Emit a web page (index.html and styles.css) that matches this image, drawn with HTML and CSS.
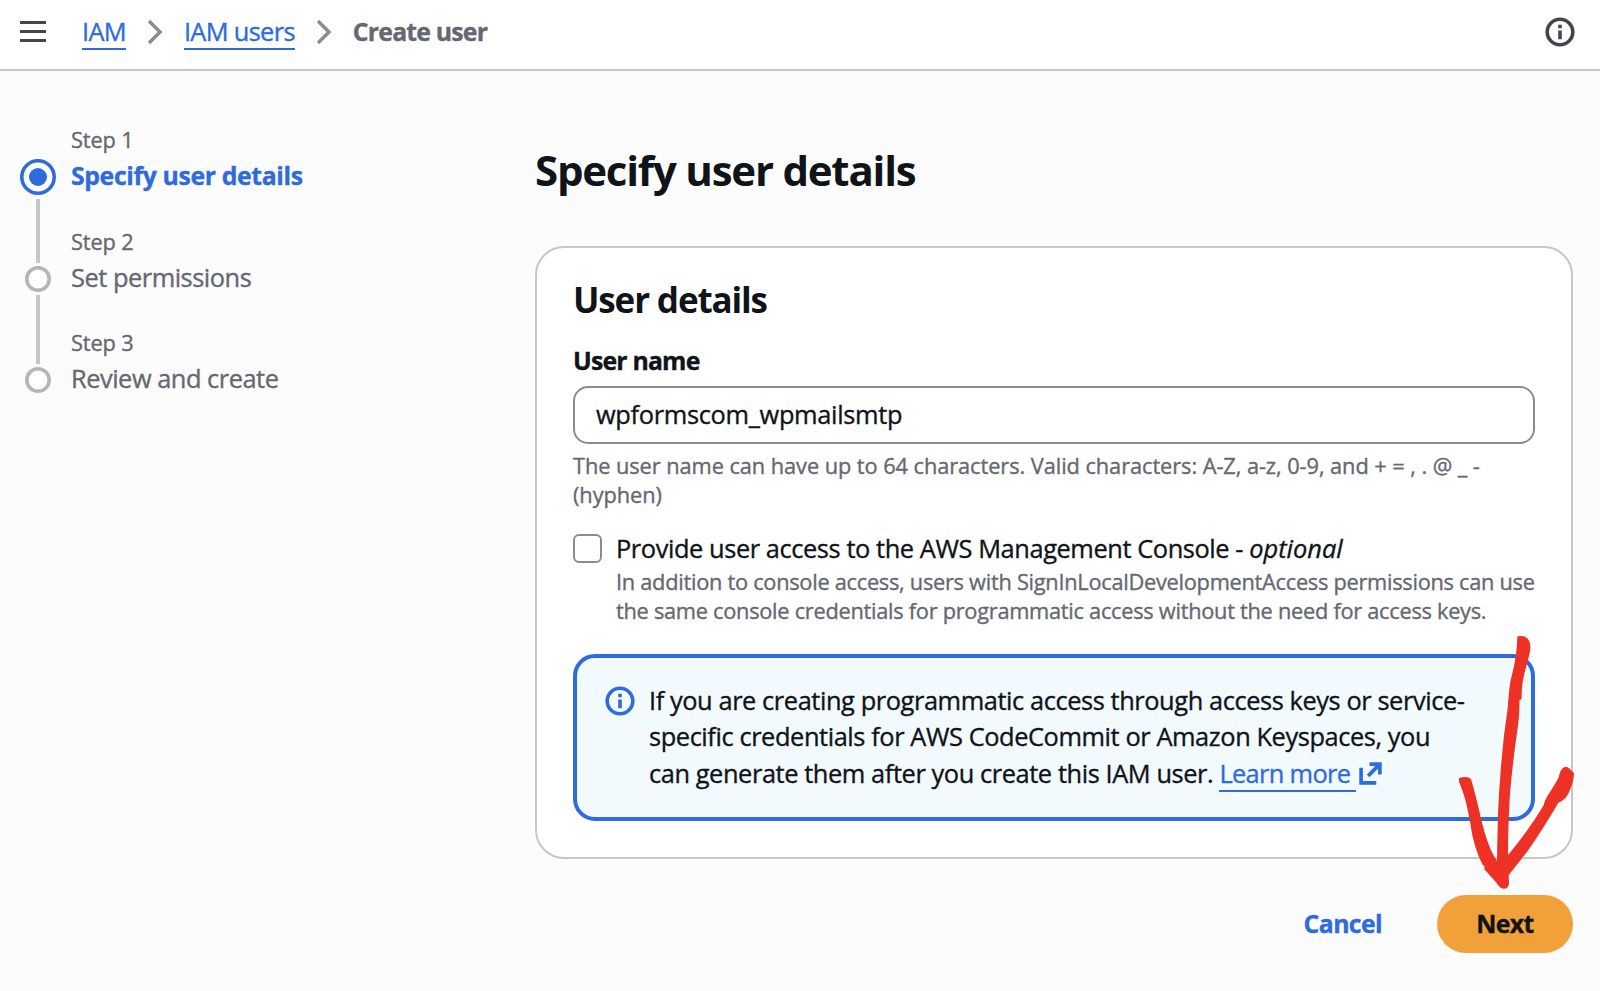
FILE: index.html
```html
<!DOCTYPE html>
<html lang="en">
<head>
    <meta charset="UTF-8">
    <meta name="viewport" content="width=device-width, initial-scale=1.0">
    <title>Create user | IAM</title>
    <link rel="stylesheet" href="styles.css">
</head>
<body>
    <header class="topbar">
        <button class="menu-button" aria-label="Menu"><span></span><span></span><span></span></button>
        <nav class="breadcrumbs">
            <a href="#">IAM</a>
            <svg class="chevron" width="16" height="26" viewBox="0 0 16 26"><path d="M2 2l11 11L2 24"/></svg>
            <a href="#">IAM users</a>
            <svg class="chevron" width="16" height="26" viewBox="0 0 16 26"><path d="M2 2l11 11L2 24"/></svg>
            <span class="crumb-current">Create user</span>
        </nav>
        <svg class="info-icon" width="30" height="30" viewBox="0 0 30 30">
            <circle cx="15" cy="15" r="12.8"/>
            <path d="M15 7.8v3.4M15 13.5v8.7"/>
        </svg>
    </header>

    <div class="layout">
        <ol class="steps">
            <li class="step active">
                <div class="marker">
                    <svg width="36" height="36" viewBox="0 0 36 36">
                        <circle class="ring" cx="18" cy="18" r="16.2"/>
                        <circle class="dot" cx="18" cy="18" r="9"/>
                    </svg>
                    <div class="line"></div>
                </div>
                <div>
                    <div class="step-number">Step 1</div>
                    <div class="step-title">Specify user details</div>
                </div>
            </li>
            <li class="step">
                <div class="marker">
                    <svg width="26" height="26" viewBox="0 0 26 26"><circle class="ring" cx="13" cy="13" r="11.2"/></svg>
                    <div class="line"></div>
                </div>
                <div>
                    <div class="step-number">Step 2</div>
                    <div class="step-title">Set permissions</div>
                </div>
            </li>
            <li class="step">
                <div class="marker">
                    <svg width="26" height="26" viewBox="0 0 26 26"><circle class="ring" cx="13" cy="13" r="11.2"/></svg>
                </div>
                <div>
                    <div class="step-number">Step 3</div>
                    <div class="step-title">Review and create</div>
                </div>
            </li>
        </ol>

        <main>
            <h1>Specify user details</h1>
            <section class="card">
                <h2>User details</h2>
                <label class="field-label" for="username">User name</label>
                <input class="text-input" id="username" type="text" value="wpformscom_wpmailsmtp" spellcheck="false">
                <p class="hint hint-name">The user name can have up to 64 characters. Valid characters: A-Z, a-z, 0-9, and + = , . @ _ -<br>(hyphen)</p>

                <div class="check-row">
                    <input class="checkbox" id="console" type="checkbox">
                    <div>
                        <label class="check-label" for="console">Provide user access to the AWS Management Console - <em>optional</em></label>
                        <p class="hint hint-console">In addition to console access, users with SignInLocalDevelopmentAccess permissions can use<br>the same console credentials for programmatic access without the need for access keys.</p>
                    </div>
                </div>

                <div class="alert">
                    <svg class="info-icon" width="30" height="30" viewBox="0 0 30 30">
                        <circle cx="15" cy="15" r="12.8"/>
                        <path d="M15 7.8v3.4M15 13.5v8.7"/>
                    </svg>
                    <p>If you are creating programmatic access through access keys or service-<br>specific credentials for AWS CodeCommit or Amazon Keyspaces, you<br>can generate them after you create this IAM user. <a href="#">Learn more&nbsp;</a><svg class="external" width="23" height="23" viewBox="0 0 24 24"><path d="M2.2 6v15.8H18M11 2.2h10.8V13M21 3L9.5 14.5"/></svg></p>
                </div>
            </section>

            <div class="actions">
                <button class="cancel">Cancel</button>
                <button class="next">Next</button>
            </div>
        </main>
    </div>

    <!-- hand-drawn pointer to the Next button -->
    <svg class="arrow" width="120" height="260" viewBox="105 30 360 780">
        <path d="M292 49Q318 43 328 64Q334 80 329 100L316 150Q304 190 305 236L298 242Q300 280 290 345Q278 430 270 520Q264 620 264 705Q320 640 371 556Q373 540 392 513L415 475Q422 440 438 440Q450 443 462 460Q460 490 449 512Q438 540 415 548Q370 625 325 690Q295 730 266 765L267 790Q265 808 250 806Q238 804 230 789L193 748V737L188 735Q160 680 150 605Q140 550 130 520L117 485V474Q145 467 153 478Q160 500 175 560Q200 680 231 722Q233 560 240 480Q247 370 263 265Q268 190 275 168Q291 110 292 49Z"/>
    </svg>
</body>
</html>
```
FILE: styles.css
```css
* {
    box-sizing: border-box;
}

body {
    margin: 0;
    height: 991px;
    overflow: hidden;
    background: #fcfcfc;
    color: #0f141a;
    font-family: "Open Sans", "Noto Sans", sans-serif;
    font-size: 25.4px;
    line-height: 36px;
    letter-spacing: -0.42px;
    white-space: nowrap;
    -webkit-text-stroke: 0.35px;
}

h1, h2, p, ol {
    margin: 0;
    padding: 0;
}

h1, h2 {
    -webkit-text-stroke: 0;
}

button, input {
    font: inherit;
    color: inherit;
    letter-spacing: inherit;
}

a {
    color: #2e6bdc;
    text-decoration: none;
    border-bottom: 2px solid #2e6bdc;
    letter-spacing: -0.68px;
}

.topbar {
    display: flex;
    align-items: center;
    height: 71px;
    padding: 0 25px 6px 20px;
    background: #fff;
    border-bottom: 2px solid #c6c6cd;
}

.menu-button {
    display: flex;
    flex-direction: column;
    gap: 6px;
    width: 26px;
    padding: 0;
    border: none;
    background: none;
}

.menu-button span {
    height: 3px;
    background: #424650;
}

.breadcrumbs {
    display: flex;
    align-items: center;
    flex: 1;
    margin-left: 36px;
}

.breadcrumbs a {
    line-height: 34px;
}

.chevron {
    margin: 0 21px;
    fill: none;
    stroke: #8c8c94;
    stroke-width: 3.6;
}

.crumb-current {
    margin-top: -2px;
    color: #656871;
    font-size: 24.8px;
    font-weight: 700;
    letter-spacing: -0.8px;
}

.info-icon {
    flex: none;
    fill: none;
    stroke: #424650;
    stroke-width: 3.6;
}

.layout {
    display: flex;
    padding: 53px 27px 0 20px;
}

.steps {
    flex: none;
    width: 515px;
    list-style: none;
}

.step {
    display: flex;
    gap: 15px;
    height: 101.5px;
    color: #656871;
}

.marker {
    display: flex;
    flex-direction: column;
    align-items: center;
    gap: 3px;
    width: 36px;
    padding-top: 40px;
}

.marker svg {
    flex: none;
}

.ring {
    fill: #fff;
    stroke: #b4b4bb;
    stroke-width: 3.6;
}

.line {
    flex: none;
    width: 4px;
    height: 69px;
    background: #c6c6cd;
}

.step-number {
    padding-top: 1px;
    font-size: 21.8px;
    line-height: 29px;
    letter-spacing: -0.15px;
}

.step-title {
    margin-top: 3px;
    letter-spacing: -0.48px;
}

.active .marker {
    padding-top: 35px;
    gap: 4px;
}

.active .line {
    height: 64px;
}

.active .ring {
    stroke: #2e6bdc;
}

.active .dot {
    fill: #2e6bdc;
}

.active .step-title {
    color: #2e6bdc;
    font-size: 24.8px;
    font-weight: 700;
    letter-spacing: -0.37px;
}

main {
    flex: 1;
    min-width: 0;
    padding-top: 20px;
}

h1 {
    font-size: 42px;
    line-height: 52px;
    letter-spacing: -1.22px;
}

.card {
    height: 613px;
    margin-top: 50px;
    padding: 30px 36px 0;
    background: #fff;
    border: 2px solid #c6c6cd;
    border-radius: 29px;
}

h2 {
    font-size: 35px;
    line-height: 44px;
    letter-spacing: -1.13px;
}

.field-label {
    display: block;
    margin-top: 20px;
    font-size: 24.8px;
    font-weight: 700;
    letter-spacing: -0.8px;
}

.text-input {
    display: block;
    width: 100%;
    height: 58px;
    margin-top: 8px;
    padding: 0 21px 2px;
    background: #fff;
    border: 2px solid #8c8c94;
    border-radius: 15px;
    letter-spacing: -0.32px;
}

.hint {
    color: #656871;
    font-size: 21.8px;
    line-height: 29px;
}

.hint-name {
    margin-top: 7px;
    letter-spacing: -0.07px;
}

.check-row {
    display: flex;
    gap: 14px;
    margin-top: 21px;
}

.checkbox {
    appearance: none;
    flex: none;
    width: 29px;
    height: 29px;
    margin: 4px 0 0;
    background: #fff;
    border: 2px solid #8c8c94;
    border-radius: 6px;
}

.check-label {
    display: block;
}

.check-label em {
    letter-spacing: 0;
}

.hint-console {
    margin-top: 1px;
    letter-spacing: -0.28px;
}

.alert {
    display: flex;
    gap: 14px;
    height: 167px;
    margin-top: 29px;
    padding: 24px 28px;
    background: #f3fafe;
    border: 4px solid #2e6bdc;
    border-radius: 22px;
    line-height: 36.4px;
}

.alert .info-icon {
    margin-top: 4px;
    stroke: #2e6bdc;
}

.external {
    margin-left: 3px;
    vertical-align: -2px;
    fill: none;
    stroke: #2e6bdc;
    stroke-width: 3.8;
}

.actions {
    display: flex;
    justify-content: flex-end;
    gap: 55px;
    margin-top: 36px;
}

.actions button {
    height: 58px;
    padding: 0 0 2px;
    border: none;
    background: none;
    font-size: 24.8px;
    font-weight: 700;
    letter-spacing: -0.6px;
}

.actions .cancel {
    color: #2e6bdc;
}

.actions .next {
    width: 136px;
    background: #f2a039;
    border-radius: 29px;
}

.arrow {
    position: absolute;
    left: 1455px;
    top: 630px;
    fill: #ed3124;
}
```
